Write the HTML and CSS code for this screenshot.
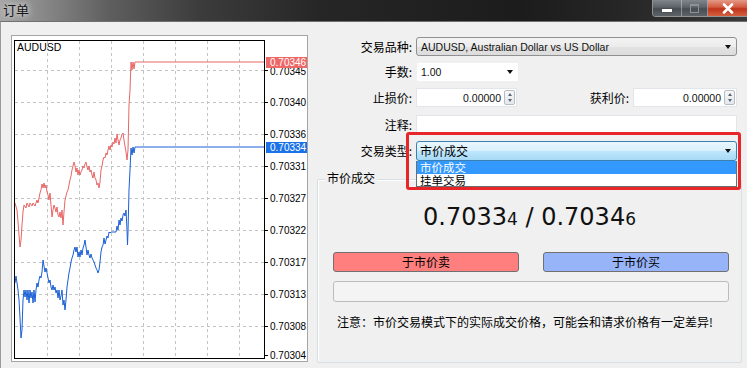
FILE: index.html
```html
<!DOCTYPE html>
<html>
<head>
<meta charset="utf-8">
<link rel="stylesheet" href="styles.css">
</head>
<body>
<div class="titlebar">
  <span class="title">订单</span>
  <div class="wbtns">
    <div class="wb min"><span class="min-ico"></span></div>
    <div class="wb max"><span class="max-ico"></span></div>
    <div class="wb close">
      <svg width="14" height="11" viewBox="0 0 14 11"><path d="M3 1.5 L11 9.5 M11 1.5 L3 9.5" stroke="#fff" stroke-width="2.6" stroke-linecap="round"/></svg>
    </div>
  </div>
</div>
<div class="main">
  <div class="chart">
    <svg width="295" height="325" viewBox="12 36 295 325">
      <rect x="12" y="36" width="295" height="325" fill="#fff"/>
      <g stroke="#c4c4c4" stroke-width="1" stroke-dasharray="3 3">
        <line x1="47.5" y1="41" x2="47.5" y2="358"/>
        <line x1="79.5" y1="41" x2="79.5" y2="358"/>
        <line x1="111.5" y1="41" x2="111.5" y2="358"/>
        <line x1="143.5" y1="41" x2="143.5" y2="358"/>
        <line x1="175.5" y1="41" x2="175.5" y2="358"/>
        <line x1="207.5" y1="41" x2="207.5" y2="358"/>
        <line x1="239.5" y1="41" x2="239.5" y2="358"/>
        <line x1="15" y1="70.5" x2="264" y2="70.5"/>
        <line x1="15" y1="102.5" x2="264" y2="102.5"/>
        <line x1="15" y1="134.5" x2="264" y2="134.5"/>
        <line x1="15" y1="166.5" x2="264" y2="166.5"/>
        <line x1="15" y1="198.5" x2="264" y2="198.5"/>
        <line x1="15" y1="230.5" x2="264" y2="230.5"/>
        <line x1="15" y1="262.5" x2="264" y2="262.5"/>
        <line x1="15" y1="294.5" x2="264" y2="294.5"/>
        <line x1="15" y1="326.5" x2="264" y2="326.5"/>
      </g>
      <polyline fill="none" stroke="#e86666" stroke-width="1" points="15,203 17,210 18,222 19,235 20,247 21,240 22,225 23,212 24,205 26,208 27,203 29,207 30,203 32,206 33,203 35,206 36,203 37,200 38,203 39,198 40,193 41,190 42,184 43,188 44,183 45,188 46,185 47,192 48,195 49,200 50,193 51,205 52,217 53,210 54,205 55,208 56,212 57,207 58,215 59,217 60,212 61,218 62,210 63,225 64,212 65,200 66,196 67,192 68,190 69,185 70,180 71,176 72,170 73,166 74,162 75,166 76,172 77,168 78,175 79,170 80,175 81,172 82,170 83,166 84,168 85,164 86,162 87,167 88,170 89,166 90,172 91,170 92,175 93,178 94,172 95,178 96,180 97,185 98,183 99,188 100,182 101,170 102,166 103,160 104,157 105,158 106,153 107,155 108,150 109,146 110,150 111,145 112,147 113,142 114,144 115,138 116,143 117,134 118,140 119,145 120,140 121,138 122,134 123,133 124,140 125,146 126,152 127,160 128,150 129,105 130,90 131,62 132,70 133,62 134,69 135,62 265,62"/>
      <polyline fill="none" stroke="#1a5fd6" stroke-width="1" points="15,283 16,276 17,283 18,290 19,300 20,318 21,338 22,330 23,300 24,290 25,297 26,290 27,300 28,290 29,303 30,290 31,298 32,292 33,303 34,290 35,302 36,290 37,283 38,287 39,280 40,276 41,278 42,272 43,260 44,266 45,272 46,268 47,273 48,278 49,283 50,280 51,287 52,290 53,285 54,290 55,287 56,293 57,290 58,298 59,290 60,300 61,296 62,290 63,305 64,300 65,310 66,300 67,287 68,280 69,273 70,268 71,262 72,258 73,255 74,250 75,247 76,252 77,247 78,257 79,252 80,257 81,250 82,255 83,248 84,245 85,240 86,247 87,255 88,250 89,255 90,258 91,254 92,258 93,260 94,262 95,265 96,268 97,270 98,273 99,270 100,262 101,252 102,247 103,245 104,238 105,244 106,240 107,236 108,238 109,232 110,233 111,232 116,232 117,226 118,230 119,220 120,225 121,218 122,221 123,215 124,213 125,216 126,210 127,230 127.5,245 128,232 129,190 130,170 131,148 132,155 133,147 134,153 135,147 265,147"/>
      <rect x="14.5" y="40.5" width="250" height="318" fill="none" stroke="#000" stroke-width="1"/>
      <g stroke="#000" stroke-width="1">
        <line x1="265" y1="70.5" x2="268" y2="70.5"/>
        <line x1="265" y1="102.5" x2="268" y2="102.5"/>
        <line x1="265" y1="134.5" x2="268" y2="134.5"/>
        <line x1="265" y1="166.5" x2="268" y2="166.5"/>
        <line x1="265" y1="198.5" x2="268" y2="198.5"/>
        <line x1="265" y1="230.5" x2="268" y2="230.5"/>
        <line x1="265" y1="262.5" x2="268" y2="262.5"/>
        <line x1="265" y1="294.5" x2="268" y2="294.5"/>
        <line x1="265" y1="326.5" x2="268" y2="326.5"/>
        <line x1="265" y1="355.5" x2="268" y2="355.5"/>
      </g>
      <g class="axis">
        <text x="270" y="75">0.70345</text>
        <text x="270" y="106">0.70340</text>
        <text x="270" y="138">0.70336</text>
        <text x="270" y="170">0.70331</text>
        <text x="270" y="202">0.70327</text>
        <text x="270" y="234">0.70322</text>
        <text x="270" y="266">0.70317</text>
        <text x="270" y="298">0.70313</text>
        <text x="270" y="330">0.70308</text>
        <text x="270" y="359">0.70304</text>
      </g>
      <rect x="266" y="57" width="41" height="11" fill="#ef6868"/>
      <text class="axis tag" x="270" y="66">0.70346</text>
      <rect x="266" y="142" width="41" height="11" fill="#1b72e6"/>
      <text class="axis tag" x="270" y="151">0.70334</text>
      <text class="sym" x="17" y="51">AUDUSD</text>
    </svg>
  </div>
  <div class="panel">
    <div class="row r1">
      <span class="lbl">交易品种:</span>
      <div class="combo sym-combo"><span class="ctext">AUDUSD, Australian Dollar vs US Dollar</span><i class="arrow"></i></div>
    </div>
    <div class="row r2">
      <span class="lbl">手数:</span>
      <div class="edit lots"><span class="ctext">1.00</span><i class="arrow"></i></div>
    </div>
    <div class="row r3">
      <span class="lbl">止损价:</span>
      <div class="edit spin sl"><span class="num">0.00000</span><span class="spinbtn"><i class="up"></i><i class="dn"></i></span></div>
      <span class="lbl tp-lbl">获利价:</span>
      <div class="edit spin tp"><span class="num">0.00000</span><span class="spinbtn"><i class="up"></i><i class="dn"></i></span></div>
    </div>
    <div class="row r4">
      <span class="lbl">注释:</span>
      <div class="edit comment"></div>
    </div>
    <div class="row r5">
      <span class="lbl">交易类型:</span>
      <div class="combo type-combo"><span class="cjk">市价成交</span><i class="arrow"></i></div>
      <div class="droplist">
        <div class="item sel">市价成交</div>
        <div class="item">挂单交易</div>
      </div>
      <div class="redbox"></div>
    </div>
    <div class="group">
      <span class="glabel">市价成交</span>
      <div class="price">0.7033<span class="small">4</span> / 0.7034<span class="small">6</span></div>
      <div class="btns">
        <div class="btn sell">于市价卖</div>
        <div class="btn buy">于市价买</div>
      </div>
      <div class="progress"></div>
      <div class="note">注意：市价交易模式下的实际成交价格，可能会和请求价格有一定差异!</div>
    </div>
  </div>
</div>
</body>
</html>
```
FILE: styles.css
```css
html, body {
  margin: 0;
  padding: 0;
}
body {
  width: 747px;
  height: 368px;
  overflow: hidden;
  background: #f0f0f0;
  font-family: "Noto Sans CJK SC", sans-serif;
  font-size: 12px;
  color: #000;
}
.titlebar {
  height: 21px;
  display: flex;
  align-items: flex-start;
  background: linear-gradient(90deg, #a6a6a6 0, #8a8a8a 40px, #5e5e5e 110px, #3c3c3c 200px, #262626 320px, #1c1c1c 520px, #262626 620px, #3a3a3a 100%);
}
.title {
  padding-left: 3px;
  font-size: 13px;
  line-height: 19px;
  color: #151515;
  text-shadow: 0 0 4px #ddd, 0 0 8px rgba(255, 255, 255, 0.6);
}
.wbtns {
  margin-left: auto;
  display: flex;
  height: 17px;
  border: 1px solid rgba(230, 230, 230, 0.55);
  border-top: none;
  border-right: none;
  border-radius: 0 0 0 4px;
  overflow: hidden;
  box-sizing: border-box;
}
.wb {
  height: 16px;
  display: flex;
  align-items: center;
  justify-content: center;
}
.wb.min, .wb.max {
  background: linear-gradient(#80868c, #5c6268 45%, #474c52 55%, #5d6369);
  border-right: 1px solid rgba(220, 220, 220, 0.45);
}
.wb.min { width: 28px; }
.wb.max { width: 25px; }
.min-ico {
  width: 10px;
  height: 3px;
  background: #fff;
  margin-top: 5px;
  box-shadow: 0 0 1px #333;
}
.max-ico {
  width: 7px;
  height: 6px;
  border: 1px solid #8d9297;
  border-top-width: 2px;
}
.wb.close {
  width: 39px;
  background: linear-gradient(#e59a86, #d35a40 45%, #c0341c 55%, #d4603f);
}
.main {
  display: flex;
  border-top: 1px solid #6f6f6f;
  border-left: 1px solid #9a9a9a;
  padding: 13px 5px 0 10px;
  height: 346px;
}
.chart {
  width: 297px;
  height: 327px;
  box-sizing: border-box;
  border: 1px solid #a5a5a5;
  background: #fff;
  flex: none;
}
.chart svg { display: block; }
.axis {
  font-family: "Liberation Sans", Arial, sans-serif;
  font-size: 10px;
  fill: #000;
}
.axis.tag { fill: #fff; }
.sym {
  font-family: "Liberation Sans", Arial, sans-serif;
  font-size: 10.5px;
  fill: #000;
}
.panel {
  margin-left: 9px;
  width: 425px;
  padding-top: 2px;
  display: flex;
  flex-direction: column;
}
.row {
  display: flex;
  align-items: center;
  position: relative;
}
.r1 { height: 19px; }
.r2 { height: 20px; margin-top: 6px; }
.r3 { height: 19px; margin-top: 6px; }
.r4 { height: 19px; margin-top: 8px; }
.r5 { height: 20px; margin-top: 7px; }
.lbl {
  width: 95px;
  margin-right: 4px;
  text-align: right;
  line-height: 16px;
  flex: none;
}
.tp-lbl {
  width: 112px;
}
.combo, .edit {
  box-sizing: border-box;
  height: 100%;
  display: flex;
  align-items: center;
  position: relative;
}
.combo {
  width: 321px;
  border: 1px solid #8f9091;
  border-radius: 3px;
  background: linear-gradient(#f3f3f3 0, #ececec 50%, #e3e3e3 51%, #dcdcdc 100%);
  padding-left: 4px;
}
.ctext, .num {
  font-family: "Liberation Sans", Arial, sans-serif;
  font-size: 10.5px;
  color: #111;
}
.arrow {
  margin-left: auto;
  margin-right: 5px;
  width: 0;
  height: 0;
  border-left: 3.5px solid transparent;
  border-right: 3.5px solid transparent;
  border-top: 4px solid #111;
}
.edit {
  background: #fff;
  border: 1px solid #e2e5ea;
}
.lots {
  width: 103px;
  padding-left: 4px;
  border-color: #f0f0f0;
}
.lots .arrow { margin-right: 5px; }
.spin {
  justify-content: flex-end;
  padding-right: 1px;
}
.sl { width: 101px; }
.tp { width: 104px; }
.num { margin-right: 3px; }
.spinbtn {
  width: 11px;
  height: 15px;
  border: 1px solid #b7bcc4;
  border-radius: 2px;
  box-sizing: border-box;
  display: flex;
  flex-direction: column;
  align-items: center;
  justify-content: space-around;
  background: linear-gradient(#f6f6f6, #e6e8ec);
}
.spinbtn .up, .spinbtn .dn {
  width: 0;
  height: 0;
  border-left: 2.5px solid transparent;
  border-right: 2.5px solid transparent;
}
.spinbtn .up { border-bottom: 3px solid #5a6478; }
.spinbtn .dn { border-top: 3px solid #5a6478; }
.comment {
  width: 321px;
}
.type-combo {
  border-color: #3c7fb1;
  background: linear-gradient(#eaf6fd 0, #d9f0fc 48%, #bee6fd 52%, #a7d9f5 100%);
  padding-left: 3px;
}
.cjk { line-height: 16px; }
.droplist {
  position: absolute;
  left: 99px;
  top: 20px;
  width: 321px;
  height: 26px;
  box-sizing: border-box;
  border: 1px solid #6e6e6e;
  border-top: none;
  background: #fff;
  z-index: 2;
}
.item {
  height: 12.5px;
  line-height: 12.5px;
  font-size: 11.5px;
  padding-left: 3px;
}
.item.sel {
  background: #3399ff;
  color: #fff;
}
.redbox {
  position: absolute;
  left: 89px;
  top: -9px;
  width: 335px;
  height: 58px;
  box-sizing: border-box;
  border: 3px solid #e8262a;
  border-radius: 3px;
  z-index: 3;
}
.group {
  position: relative;
  margin-top: 18px;
  height: 184px;
  box-sizing: border-box;
  border: 1px solid #d5dfe5;
  box-shadow: inset 1px 1px 0 #fff;
  border-radius: 2px;
}
.glabel {
  position: absolute;
  left: 7px;
  top: -10px;
  padding: 0 2px;
  background: #f0f0f0;
  line-height: 16px;
}
.price {
  margin-top: 22px;
  height: 30px;
  line-height: 30px;
  text-align: center;
  font-family: "DejaVu Sans", sans-serif;
  font-size: 24px;
  color: #111;
}
.price .small { font-size: 17px; }
.btns {
  margin-top: 20px;
  height: 20px;
  display: flex;
  justify-content: space-between;
  padding: 0 12px 0 15px;
}
.btn {
  width: 186px;
  height: 20px;
  box-sizing: border-box;
  border: 1px solid #707070;
  border-radius: 3px;
  text-align: center;
  line-height: 18px;
}
.sell { background: #ff7f7f; }
.buy { background: #98b4f8; }
.progress {
  margin: 9px 12px 0 15px;
  height: 21px;
  box-sizing: border-box;
  border: 1px solid #bcbcbc;
  border-radius: 3px;
  background: #f4f4f4;
}
.note {
  margin-top: 13px;
  padding-left: 19px;
  line-height: 14px;
}
```
